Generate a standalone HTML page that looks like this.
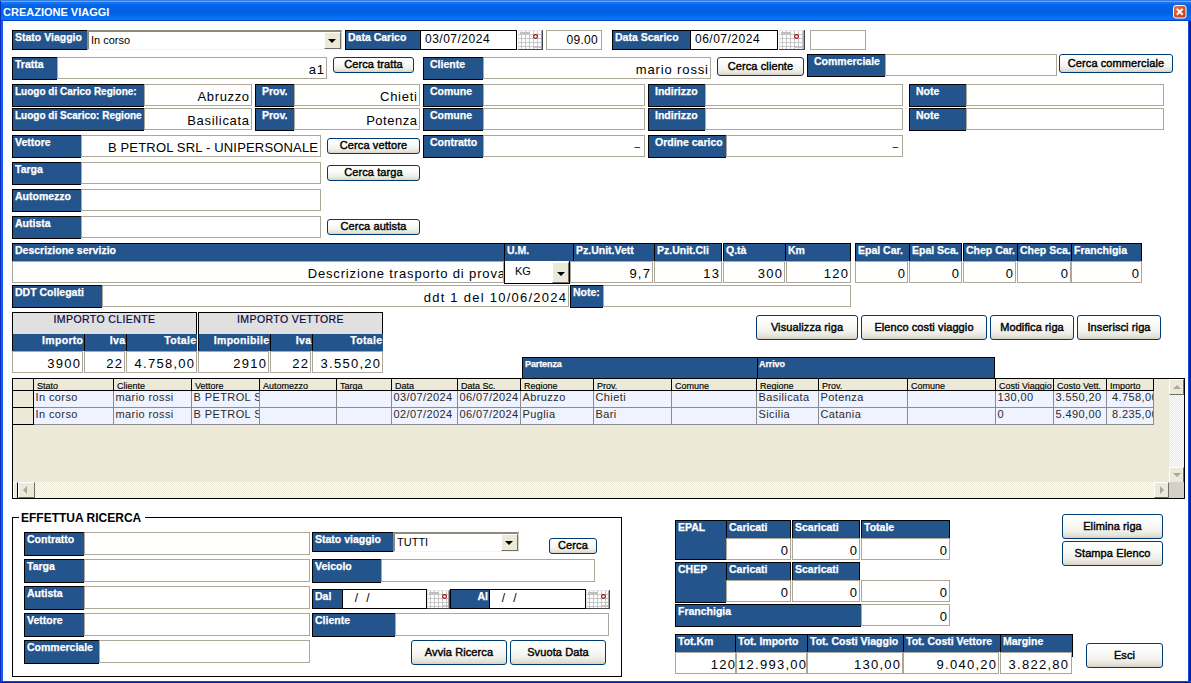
<!DOCTYPE html>
<html><head><meta charset="utf-8"><title>Creazione Viaggi</title>
<style>
html,body{margin:0;padding:0;}
body{width:1191px;height:683px;overflow:hidden;background:#fff;font-family:"Liberation Sans",sans-serif;}
#win{position:relative;width:1191px;height:683px;background:#fff;overflow:hidden;}
#win div{position:absolute;box-sizing:border-box;}
#win span{position:absolute;white-space:nowrap;line-height:1;}
#fl{left:0;top:0;width:3px;height:683px;background:linear-gradient(90deg,#0734d2 0,#0734d2 1px,#1a5ff0 1px,#1258ec 3px);z-index:3}
#fr{left:1188px;top:0;width:3px;height:683px;background:linear-gradient(90deg,#1048e4 0,#1048e4 1px,#0828b8 1px,#001890 3px);z-index:3}
#fb{left:0;top:681px;width:1191px;height:2px;background:linear-gradient(180deg,#1048e4 0,#1048e4 1px,#001a98 1px);z-index:3}
#title{left:0;top:0;width:1191px;height:21px;background:linear-gradient(180deg,#3a7be0 0px,#3a7be0 1px,#62a8ff 1px,#62a8ff 2px,#1a7cf6 2px,#0a6cf0 4px,#0064e6 6px,#0062e4 12px,#0066e8 15px,#0a70f4 17px,#0a70f4 20px,#0044cc 20px,#0044cc 21px);z-index:4}
#tt{left:3px;top:7px;color:#fff;font-weight:bold;font-size:11px;}
#cls{left:1173px;top:5px;width:14px;height:14px;}
#cls svg{display:block}
.lb,.hd{background:#23548c;border-top:1px solid #000;border-left:1px solid #000;color:#fff;font-weight:bold;overflow:hidden;-webkit-text-stroke:0.25px #fff;}
.lb{border-bottom:1px solid #000;}
.tb{background:#fff;border:1px solid #aca899;overflow:hidden;color:#000;}
.db{background:#fff;border:1px solid #000;overflow:hidden;color:#000;}
.bt{background:linear-gradient(180deg,#ffffff 0%,#fbfbf9 35%,#f1f0ea 70%,#e3e0d6 90%,#d6d0c4 100%);border:1px solid #003c74;border-radius:3px;font-weight:normal;text-align:center;color:#000;overflow:hidden;letter-spacing:0.1px;-webkit-text-stroke:0.4px #000;}
.bt span{text-align:center;}
.cal{overflow:hidden}
.cal svg{display:block}
.cb{background:#fff;border-top:2px solid #8e8b7d;border-left:2px solid #8e8b7d;border-right:1px solid #d4d0c8;border-bottom:1px solid #f4f3ee;overflow:hidden;color:#000;}
.cb .cbtn{right:0;top:0;bottom:0;background:#ece9d8;border-top:1px solid #fff;border-left:1px solid #fff;border-right:1px solid #716f64;border-bottom:1px solid #716f64;}
.cb .arr{position:absolute;left:3px;top:calc(50% - 2px);width:0;height:0;border-left:4px solid transparent;border-right:4px solid transparent;border-top:4px solid #000;}
.cbk{border:1px solid #000;border-top:0;}
.cbk .cbtn{top:1px;bottom:0;}
.cbk .arr{left:4px;top:calc(50% - 1px);}
.gh{background:#e0e0e0;border:1px solid #000;color:#0a0a48;font-size:10.5px;text-align:center;-webkit-text-stroke:0.2px #0a0a48;}
.gh span{text-align:center}
.sh{background:#23548c;border-left:1px solid #000;color:#fff;font-weight:bold;font-size:10.5px;overflow:hidden;-webkit-text-stroke:0.25px #fff;}
#grid{left:12px;top:378px;width:1173px;height:121px;border:1px solid #000;background:#ece9d8;overflow:hidden;}
.gch{background:#ece9d8;border-left:1px solid #000;border-bottom:1px solid #000;font-size:9px;overflow:hidden;color:#000;-webkit-text-stroke:0.15px #000;}
.gsel{background:#ece9d8;border-right:1px solid #000;border-bottom:1px solid #000;}
.gc{background:#eff3ff;border-left:1px solid #8c8c8c;border-bottom:1px solid #8c8c8c;font-size:11px;letter-spacing:0.4px;overflow:hidden;color:#2a2a2a;}
#vsb{left:1156px;top:0;width:15px;height:103px;background:conic-gradient(#ece9d8 25%,#fdfdfb 0 50%,#ece9d8 0 75%,#fdfdfb 0) 0 0/2px 2px;}
#hsb{left:0;top:103px;width:1156px;height:16px;background:conic-gradient(#ece9d8 25%,#fdfdfb 0 50%,#ece9d8 0 75%,#fdfdfb 0) 0 0/2px 2px;}
.hs0{left:0;top:0;width:5px;height:16px;background:#ece9d8;border-left:1px solid #fff;border-top:1px solid #fff;border-right:1px solid #000;}
.sbb{width:15px;height:16px;background:#ece9d8;border-top:1px solid #fff;border-left:1px solid #fff;border-right:1px solid #716f64;border-bottom:1px solid #716f64;}
#corner{left:1156px;top:103px;width:15px;height:16px;background:#d4d0c8;}
.au,.ad,.al,.ar{position:absolute;width:0;height:0;}
.au{left:3px;top:5px;border-left:4px solid transparent;border-right:4px solid transparent;border-bottom:4px solid #aca899;}
.ad{left:3px;top:5px;border-left:4px solid transparent;border-right:4px solid transparent;border-top:4px solid #aca899;}
.al{left:4px;top:3px;border-top:4px solid transparent;border-bottom:4px solid transparent;border-right:4px solid #aca899;}
.ar{left:5px;top:3px;border-top:4px solid transparent;border-bottom:4px solid transparent;border-left:4px solid #aca899;}
#gbox{left:12px;top:517px;width:610px;height:160px;border:1px solid #000;}
#gtitle{left:19px;top:511px;width:126px;height:14px;background:#fff;font-size:12px;font-weight:bold;color:#000;}
#fl0{left:0;top:1px;width:1px;height:682px;background:#0a2cc0;z-index:6}

</style></head><body><div id="win">
<div id="title"><span id="tt">CREAZIONE VIAGGI</span><div id="cls"><svg width="14" height="14" viewBox="0 0 14 14"><defs><linearGradient id="cg" x1="0" y1="0" x2="1" y2="1"><stop offset="0" stop-color="#e87a5a"/><stop offset="0.45" stop-color="#e0501f"/><stop offset="1" stop-color="#c43c10"/></linearGradient></defs><rect x="0.5" y="0.5" width="12.5" height="12.5" rx="2.2" fill="url(#cg)" stroke="#fff" stroke-width="1"/><path d="M3.8 3.8 L9.7 9.7 M9.7 3.8 L3.8 9.7" stroke="#fff" stroke-width="2.1"/></svg></div></div>
<div id="fl"></div><div id="fr"></div><div id="fb"></div><div id="fl0"></div>
<div class="lb" style="left:12px;top:30px;width:75px;height:20px;"><span style="left:2px;top:1px;font-size:10.5px;">Stato Viaggio</span></div>
<div class="cb" style="left:87px;top:30px;width:255px;height:20px;"><span style="left:2px;top:3px;font-size:11px;">In corso</span><div class="cbtn" style="width:17px;"><i class="arr"></i></div></div>
<div class="lb" style="left:345px;top:30px;width:75px;height:20px;"><span style="left:2px;top:1px;font-size:10.5px;">Data Carico</span></div>
<div class="db" style="left:420px;top:30px;width:97px;height:20px;"><span style="left:4px;top:2px;font-size:12px;letter-spacing:0.5px;">03/07/2024</span></div>
<div class="cal" style="left:518px;top:30px;width:25px;height:20px;"><svg width="25" height="20" viewBox="0 0 25 20" shape-rendering="crispEdges"><rect x="0" y="0" width="25" height="20" fill="#44444e"/><rect x="0" y="0" width="24" height="19" fill="#e6e6ec"/><rect x="1" y="1" width="23" height="18" fill="#ffffff"/><rect x="3" y="1" width="1" height="18" fill="#c6c6c6"/><rect x="7" y="1" width="1" height="18" fill="#c6c6c6"/><rect x="11" y="1" width="1" height="18" fill="#c6c6c6"/><rect x="15" y="1" width="1" height="18" fill="#c6c6c6"/><rect x="19" y="1" width="1" height="18" fill="#c6c6c6"/><rect x="23" y="1" width="1" height="18" fill="#c6c6c6"/><rect x="1" y="4" width="23" height="1" fill="#c6c6c6"/><rect x="1" y="8" width="23" height="1" fill="#c6c6c6"/><rect x="1" y="12" width="23" height="1" fill="#c6c6c6"/><rect x="1" y="16" width="23" height="1" fill="#c6c6c6"/><rect x="23" y="1" width="1" height="18" fill="#a8a8b0"/><rect x="2" y="2" width="10" height="2" fill="#c0c0c0"/><rect x="15" y="16" width="8" height="2" fill="#c6c6c6"/></svg><svg width="25" height="20" viewBox="0 0 25 20" style="position:absolute;left:0;top:0"><circle cx="17.5" cy="6.5" r="1.9" fill="#fff" stroke="#990000" stroke-width="1.1"/></svg></div>
<div class="tb" style="left:546px;top:30px;width:56px;height:20px;letter-spacing:0.3px"><span style="right:3px;top:3px;font-size:12px;">09.00</span></div>
<div class="lb" style="left:612px;top:30px;width:78px;height:20px;"><span style="left:2px;top:1px;font-size:10.5px;">Data Scarico</span></div>
<div class="db" style="left:690px;top:30px;width:88px;height:20px;"><span style="left:4px;top:2px;font-size:12px;letter-spacing:0.5px;">06/07/2024</span></div>
<div class="cal" style="left:779px;top:30px;width:26px;height:20px;"><svg width="26" height="20" viewBox="0 0 26 20" shape-rendering="crispEdges"><rect x="0" y="0" width="26" height="20" fill="#44444e"/><rect x="0" y="0" width="25" height="19" fill="#e6e6ec"/><rect x="1" y="1" width="24" height="18" fill="#ffffff"/><rect x="3" y="1" width="1" height="18" fill="#c6c6c6"/><rect x="7" y="1" width="1" height="18" fill="#c6c6c6"/><rect x="11" y="1" width="1" height="18" fill="#c6c6c6"/><rect x="15" y="1" width="1" height="18" fill="#c6c6c6"/><rect x="19" y="1" width="1" height="18" fill="#c6c6c6"/><rect x="23" y="1" width="1" height="18" fill="#c6c6c6"/><rect x="1" y="4" width="24" height="1" fill="#c6c6c6"/><rect x="1" y="8" width="24" height="1" fill="#c6c6c6"/><rect x="1" y="12" width="24" height="1" fill="#c6c6c6"/><rect x="1" y="16" width="24" height="1" fill="#c6c6c6"/><rect x="24" y="1" width="1" height="18" fill="#a8a8b0"/><rect x="2" y="2" width="10" height="2" fill="#c0c0c0"/><rect x="15" y="16" width="9" height="2" fill="#c6c6c6"/></svg><svg width="26" height="20" viewBox="0 0 26 20" style="position:absolute;left:0;top:0"><circle cx="17.5" cy="6.5" r="1.9" fill="#fff" stroke="#990000" stroke-width="1.1"/></svg></div>
<div class="tb" style="left:810px;top:30px;width:56px;height:20px;"></div>
<div class="lb" style="left:12px;top:57px;width:45px;height:23px;"><span style="left:2px;top:1px;font-size:10.5px;">Tratta</span></div>
<div class="tb" style="left:57px;top:57px;width:270px;height:22px;"><span style="right:2px;top:5px;font-size:13px;letter-spacing:0.89px;margin-right:-0.89px;">a1</span></div>
<div class="bt" style="left:333px;top:57px;width:81px;height:16px;"><span style="left:0;right:0;top:1px;font-size:11px;">Cerca tratta</span></div>
<div class="lb" style="left:423px;top:57px;width:60px;height:23px;"><span style="left:6px;top:1px;font-size:10.5px;">Cliente</span></div>
<div class="tb" style="left:483px;top:57px;width:228px;height:22px;"><span style="right:2px;top:5px;font-size:13px;letter-spacing:0.86px;margin-right:-0.86px;">mario rossi</span></div>
<div class="bt" style="left:717px;top:57px;width:87px;height:19px;"><span style="left:0;right:0;top:3px;font-size:11px;">Cerca cliente</span></div>
<div class="lb" style="left:807px;top:54px;width:78px;height:23px;"><span style="left:6px;top:1px;font-size:10.5px;">Commerciale</span></div>
<div class="tb" style="left:885px;top:54px;width:172px;height:22px;"></div>
<div class="bt" style="left:1059px;top:54px;width:114px;height:19px;"><span style="left:0;right:0;top:3px;font-size:11px;">Cerca commerciale</span></div>
<div class="lb" style="left:12px;top:84px;width:132px;height:23px;"><span style="left:2px;top:2px;font-size:10px;">Luogo di Carico Regione:</span></div>
<div class="tb" style="left:144px;top:84px;width:108px;height:22px;"><span style="right:2px;top:5px;font-size:13px;letter-spacing:0.63px;margin-right:-0.63px;">Abruzzo</span></div>
<div class="lb" style="left:255px;top:84px;width:39px;height:23px;"><span style="left:6px;top:1px;font-size:10.5px;">Prov.</span></div>
<div class="tb" style="left:294px;top:84px;width:126px;height:22px;"><span style="right:2px;top:5px;font-size:13px;letter-spacing:0.75px;margin-right:-0.75px;">Chieti</span></div>
<div class="lb" style="left:423px;top:84px;width:60px;height:23px;"><span style="left:6px;top:1px;font-size:10.5px;">Comune</span></div>
<div class="tb" style="left:483px;top:84px;width:162px;height:22px;"></div>
<div class="lb" style="left:648px;top:84px;width:57px;height:23px;"><span style="left:6px;top:1px;font-size:10.5px;">Indirizzo</span></div>
<div class="tb" style="left:705px;top:84px;width:198px;height:22px;"></div>
<div class="lb" style="left:909px;top:84px;width:57px;height:23px;"><span style="left:6px;top:1px;font-size:10.5px;">Note</span></div>
<div class="tb" style="left:966px;top:84px;width:198px;height:22px;"></div>
<div class="lb" style="left:12px;top:108px;width:132px;height:23px;"><span style="left:2px;top:2px;font-size:10px;">Luogo di Scarico: Regione</span></div>
<div class="tb" style="left:144px;top:108px;width:108px;height:22px;"><span style="right:2px;top:5px;font-size:13px;letter-spacing:0.68px;margin-right:-0.68px;">Basilicata</span></div>
<div class="lb" style="left:255px;top:108px;width:39px;height:23px;"><span style="left:6px;top:1px;font-size:10.5px;">Prov.</span></div>
<div class="tb" style="left:294px;top:108px;width:126px;height:22px;"><span style="right:2px;top:5px;font-size:13px;letter-spacing:0.52px;margin-right:-0.52px;">Potenza</span></div>
<div class="lb" style="left:423px;top:108px;width:60px;height:23px;"><span style="left:6px;top:1px;font-size:10.5px;">Comune</span></div>
<div class="tb" style="left:483px;top:108px;width:162px;height:22px;"></div>
<div class="lb" style="left:648px;top:108px;width:57px;height:23px;"><span style="left:6px;top:1px;font-size:10.5px;">Indirizzo</span></div>
<div class="tb" style="left:705px;top:108px;width:198px;height:22px;"></div>
<div class="lb" style="left:909px;top:108px;width:57px;height:23px;"><span style="left:6px;top:1px;font-size:10.5px;">Note</span></div>
<div class="tb" style="left:966px;top:108px;width:198px;height:22px;"></div>
<div class="lb" style="left:12px;top:135px;width:69px;height:23px;"><span style="left:2px;top:1px;font-size:10.5px;">Vettore</span></div>
<div class="tb" style="left:81px;top:135px;width:240px;height:22px;"><span style="right:2px;top:5px;font-size:13px;letter-spacing:0.17px;margin-right:-0.17px;">B PETROL SRL - UNIPERSONALE</span></div>
<div class="bt" style="left:327px;top:138px;width:93px;height:16px;"><span style="left:0;right:0;top:1px;font-size:11px;">Cerca vettore</span></div>
<div class="lb" style="left:423px;top:135px;width:60px;height:23px;"><span style="left:6px;top:1px;font-size:10.5px;">Contratto</span></div>
<div class="tb" style="left:483px;top:135px;width:162px;height:22px;"><span style="right:4px;top:6px;font-size:10px;">–</span></div>
<div class="lb" style="left:648px;top:135px;width:78px;height:23px;"><span style="left:6px;top:1px;font-size:10.5px;">Ordine carico</span></div>
<div class="tb" style="left:726px;top:135px;width:177px;height:22px;"><span style="right:4px;top:6px;font-size:10px;">–</span></div>
<div class="lb" style="left:12px;top:162px;width:69px;height:23px;"><span style="left:2px;top:1px;font-size:10.5px;">Targa</span></div>
<div class="tb" style="left:81px;top:162px;width:240px;height:22px;"></div>
<div class="bt" style="left:327px;top:165px;width:93px;height:16px;"><span style="left:0;right:0;top:1px;font-size:11px;">Cerca targa</span></div>
<div class="lb" style="left:12px;top:189px;width:69px;height:23px;"><span style="left:2px;top:1px;font-size:10.5px;">Automezzo</span></div>
<div class="tb" style="left:81px;top:189px;width:240px;height:22px;"></div>
<div class="lb" style="left:12px;top:216px;width:69px;height:23px;"><span style="left:2px;top:1px;font-size:10.5px;">Autista</span></div>
<div class="tb" style="left:81px;top:216px;width:240px;height:22px;"></div>
<div class="bt" style="left:327px;top:219px;width:93px;height:16px;"><span style="left:0;right:0;top:1px;font-size:11px;">Cerca autista</span></div>
<div class="hd" style="left:12px;top:243px;width:492px;height:18px;"><span style="left:2px;top:1px;font-size:10.5px;">Descrizione servizio</span></div>
<div class="hd" style="left:504px;top:243px;width:69px;height:18px;"><span style="left:2px;top:1px;font-size:10.5px;">U.M.</span></div>
<div class="hd" style="left:573px;top:243px;width:81px;height:18px;"><span style="left:2px;top:1px;font-size:10.5px;">Pz.Unit.Vett</span></div>
<div class="hd" style="left:654px;top:243px;width:68px;height:18px;border-right:1px solid #000;"><span style="left:2px;top:1px;font-size:10.5px;">Pz.Unit.Cli</span></div>
<div class="hd" style="left:723px;top:243px;width:62px;height:18px;"><span style="left:2px;top:1px;font-size:10.5px;">Q.tà</span></div>
<div class="hd" style="left:785px;top:243px;width:66px;height:18px;border-right:1px solid #000;"><span style="left:2px;top:1px;font-size:10.5px;">Km</span></div>
<div class="tb" style="left:12px;top:261px;width:492px;height:22px;"><span style="right:-2px;top:5px;font-size:13px;letter-spacing:0.85px;margin-right:-0.85px;">Descrizione trasporto di prova</span></div>
<div class="cb cbk" style="left:504px;top:261px;width:66px;height:23px;"><span style="left:10px;top:5px;font-size:11px;">KG</span><div class="cbtn" style="width:17px;"><i class="arr"></i></div></div>
<div class="tb" style="left:570px;top:261px;width:83px;height:22px;"><span style="right:2px;top:5px;font-size:13px;letter-spacing:1.27px;margin-right:-1.27px;">9,7</span></div>
<div class="tb" style="left:654px;top:261px;width:68px;height:22px;"><span style="right:2px;top:5px;font-size:13px;letter-spacing:1.25px;margin-right:-1.25px;">13</span></div>
<div class="tb" style="left:723px;top:261px;width:62px;height:22px;"><span style="right:2px;top:5px;font-size:13px;letter-spacing:1.25px;margin-right:-1.25px;">300</span></div>
<div class="tb" style="left:786px;top:261px;width:65px;height:22px;"><span style="right:2px;top:5px;font-size:13px;letter-spacing:1.25px;margin-right:-1.25px;">120</span></div>
<div class="hd" style="left:855px;top:243px;width:54px;height:18px;"><span style="left:2px;top:1px;font-size:10.5px;">Epal Car.</span></div>
<div class="hd" style="left:909px;top:243px;width:53px;height:18px;border-right:1px solid #000;"><span style="left:2px;top:1px;font-size:10.5px;">Epal Sca.</span></div>
<div class="hd" style="left:963px;top:243px;width:54px;height:18px;"><span style="left:2px;top:1px;font-size:10.5px;">Chep Car.</span></div>
<div class="hd" style="left:1017px;top:243px;width:54px;height:18px;"><span style="left:2px;top:1px;font-size:10.5px;">Chep Sca.</span></div>
<div class="hd" style="left:1071px;top:243px;width:71px;height:18px;border-right:1px solid #000;"><span style="left:2px;top:1px;font-size:10.5px;">Franchigia</span></div>
<div class="tb" style="left:855px;top:261px;width:53px;height:22px;"><span style="right:2px;top:5px;font-size:13px;letter-spacing:1.25px;margin-right:-1.25px;">0</span></div>
<div class="tb" style="left:909px;top:261px;width:53px;height:22px;"><span style="right:2px;top:5px;font-size:13px;letter-spacing:1.25px;margin-right:-1.25px;">0</span></div>
<div class="tb" style="left:963px;top:261px;width:53px;height:22px;"><span style="right:2px;top:5px;font-size:13px;letter-spacing:1.25px;margin-right:-1.25px;">0</span></div>
<div class="tb" style="left:1017px;top:261px;width:54px;height:22px;"><span style="right:2px;top:5px;font-size:13px;letter-spacing:1.25px;margin-right:-1.25px;">0</span></div>
<div class="tb" style="left:1071px;top:261px;width:71px;height:22px;"><span style="right:2px;top:5px;font-size:13px;letter-spacing:1.25px;margin-right:-1.25px;">0</span></div>
<div class="lb" style="left:12px;top:285px;width:90px;height:23px;"><span style="left:2px;top:1px;font-size:10.5px;">DDT Collegati</span></div>
<div class="tb" style="left:102px;top:285px;width:467px;height:22px;"><span style="right:2px;top:5px;font-size:13px;letter-spacing:1.25px;margin-right:-1.25px;">ddt 1 del 10/06/2024</span></div>
<div class="lb" style="left:570px;top:285px;width:33px;height:23px;"><span style="left:2px;top:1px;font-size:10.5px;">Note:</span></div>
<div class="tb" style="left:603px;top:285px;width:248px;height:22px;"></div>
<div class="bt" style="left:756px;top:315px;width:102px;height:25px;"><span style="left:0;right:0;top:6px;font-size:11px;">Visualizza riga</span></div>
<div class="bt" style="left:861px;top:315px;width:126px;height:25px;"><span style="left:0;right:0;top:6px;font-size:11px;">Elenco costi viaggio</span></div>
<div class="bt" style="left:990px;top:315px;width:84px;height:25px;"><span style="left:0;right:0;top:6px;font-size:11px;">Modifica riga</span></div>
<div class="bt" style="left:1077px;top:315px;width:84px;height:25px;"><span style="left:0;right:0;top:6px;font-size:11px;">Inserisci riga</span></div>
<div class="gh" style="left:12px;top:312px;width:185px;height:23px;"><span style="left:0;right:0;top:1px;letter-spacing:0.4px">IMPORTO CLIENTE</span></div>
<div class="gh" style="left:198px;top:312px;width:185px;height:23px;"><span style="left:0;right:0;top:1px;letter-spacing:0.4px">IMPORTO VETTORE</span></div>
<div class="sh" style="left:12px;top:334px;width:72px;height:17px;"><span style="right:1px;top:1px;letter-spacing:0.3px;margin-right:-0.3px">Importo</span></div>
<div class="sh" style="left:84px;top:334px;width:42px;height:17px;"><span style="right:1px;top:1px;letter-spacing:0.3px;margin-right:-0.3px">Iva</span></div>
<div class="sh" style="left:126px;top:334px;width:71px;height:17px;"><span style="right:1px;top:1px;letter-spacing:0.3px;margin-right:-0.3px">Totale</span></div>
<div class="sh" style="left:198px;top:334px;width:72px;height:17px;"><span style="right:1px;top:1px;letter-spacing:0.3px;margin-right:-0.3px">Imponibile</span></div>
<div class="sh" style="left:270px;top:334px;width:42px;height:17px;"><span style="right:1px;top:1px;letter-spacing:0.3px;margin-right:-0.3px">Iva</span></div>
<div class="sh" style="left:312px;top:334px;width:71px;height:17px;"><span style="right:1px;top:1px;letter-spacing:0.3px;margin-right:-0.3px">Totale</span></div>
<div class="tb" style="left:12px;top:351px;width:71px;height:22px;"><span style="right:2px;top:5px;font-size:13px;letter-spacing:1.25px;margin-right:-1.25px;">3900</span></div>
<div class="tb" style="left:84px;top:351px;width:41px;height:22px;"><span style="right:2px;top:5px;font-size:13px;letter-spacing:1.25px;margin-right:-1.25px;">22</span></div>
<div class="tb" style="left:126px;top:351px;width:71px;height:22px;"><span style="right:2px;top:5px;font-size:13px;letter-spacing:1.26px;margin-right:-1.26px;">4.758,00</span></div>
<div class="tb" style="left:198px;top:351px;width:71px;height:22px;"><span style="right:2px;top:5px;font-size:13px;letter-spacing:1.25px;margin-right:-1.25px;">2910</span></div>
<div class="tb" style="left:270px;top:351px;width:41px;height:22px;"><span style="right:2px;top:5px;font-size:13px;letter-spacing:1.25px;margin-right:-1.25px;">22</span></div>
<div class="tb" style="left:312px;top:351px;width:71px;height:22px;"><span style="right:2px;top:5px;font-size:13px;letter-spacing:1.26px;margin-right:-1.26px;">3.550,20</span></div>
<div class="hd" style="left:522px;top:357px;width:235px;height:21px;"><span style="left:2px;top:2px;font-size:9px;letter-spacing:-0.1px;">Partenza</span></div>
<div class="hd" style="left:757px;top:357px;width:238px;height:21px;border-right:1px solid #000;"><span style="left:1px;top:2px;font-size:9px;letter-spacing:-0.1px;">Arrivo</span></div>
<div id="grid">
<div class="gch" style="left:20px;top:0px;width:81px;height:12px;"><span style="left:3px;top:3px">Stato</span></div>
<div class="gch" style="left:100px;top:0px;width:79px;height:12px;"><span style="left:3px;top:3px">Cliente</span></div>
<div class="gch" style="left:178px;top:0px;width:69px;height:12px;"><span style="left:3px;top:3px">Vettore</span></div>
<div class="gch" style="left:246px;top:0px;width:78px;height:12px;"><span style="left:3px;top:3px">Automezzo</span></div>
<div class="gch" style="left:323px;top:0px;width:56px;height:12px;"><span style="left:3px;top:3px">Targa</span></div>
<div class="gch" style="left:378px;top:0px;width:67px;height:12px;"><span style="left:3px;top:3px">Data</span></div>
<div class="gch" style="left:444px;top:0px;width:64px;height:12px;"><span style="left:3px;top:3px">Data Sc.</span></div>
<div class="gch" style="left:507px;top:0px;width:74px;height:12px;"><span style="left:3px;top:3px">Regione</span></div>
<div class="gch" style="left:580px;top:0px;width:79px;height:12px;"><span style="left:3px;top:3px">Prov.</span></div>
<div class="gch" style="left:658px;top:0px;width:86px;height:12px;"><span style="left:3px;top:3px">Comune</span></div>
<div class="gch" style="left:743px;top:0px;width:63px;height:12px;"><span style="left:3px;top:3px">Regione</span></div>
<div class="gch" style="left:805px;top:0px;width:90px;height:12px;"><span style="left:3px;top:3px">Prov.</span></div>
<div class="gch" style="left:894px;top:0px;width:89px;height:12px;"><span style="left:3px;top:3px">Comune</span></div>
<div class="gch" style="left:982px;top:0px;width:59px;height:12px;"><span style="left:3px;top:3px">Costi Viaggio</span></div>
<div class="gch" style="left:1040px;top:0px;width:54px;height:12px;"><span style="left:3px;top:3px">Costo Vett.</span></div>
<div class="gch" style="left:1093px;top:0px;width:48px;height:12px;border-right:1px solid #000;"><span style="left:3px;top:3px">Importo</span></div>
<div class="gsel" style="left:0px;top:0px;width:21px;height:12px;"></div>
<div class="gc" style="left:20px;top:12px;width:81px;height:17px;"><span style="left:1.5px;top:1px">In corso</span></div>
<div class="gc" style="left:100px;top:12px;width:79px;height:17px;"><span style="left:1.5px;top:1px">mario rossi</span></div>
<div class="gc" style="left:178px;top:12px;width:69px;height:17px;"><span style="left:1.5px;top:1px">B PETROL SRL</span></div>
<div class="gc" style="left:246px;top:12px;width:78px;height:17px;"><span style="left:1.5px;top:1px"></span></div>
<div class="gc" style="left:323px;top:12px;width:56px;height:17px;"><span style="left:1.5px;top:1px"></span></div>
<div class="gc" style="left:378px;top:12px;width:67px;height:17px;"><span style="left:1.5px;top:1px">03/07/2024</span></div>
<div class="gc" style="left:444px;top:12px;width:64px;height:17px;"><span style="left:1.5px;top:1px">06/07/2024</span></div>
<div class="gc" style="left:507px;top:12px;width:74px;height:17px;"><span style="left:1.5px;top:1px">Abruzzo</span></div>
<div class="gc" style="left:580px;top:12px;width:79px;height:17px;"><span style="left:1.5px;top:1px">Chieti</span></div>
<div class="gc" style="left:658px;top:12px;width:86px;height:17px;"><span style="left:1.5px;top:1px"></span></div>
<div class="gc" style="left:743px;top:12px;width:63px;height:17px;"><span style="left:1.5px;top:1px">Basilicata</span></div>
<div class="gc" style="left:805px;top:12px;width:90px;height:17px;"><span style="left:1.5px;top:1px">Potenza</span></div>
<div class="gc" style="left:894px;top:12px;width:89px;height:17px;"><span style="left:1.5px;top:1px"></span></div>
<div class="gc" style="left:982px;top:12px;width:59px;height:17px;"><span style="left:1.5px;top:1px">130,00</span></div>
<div class="gc" style="left:1040px;top:12px;width:54px;height:17px;"><span style="left:1.5px;top:1px">3.550,20</span></div>
<div class="gc" style="left:1093px;top:12px;width:48px;height:17px;border-right:1px solid #8c8c8c;"><span style="left:5px;top:1px">4.758,00</span></div>
<div class="gsel" style="left:0px;top:12px;width:21px;height:17px;"></div>
<div class="gc" style="left:20px;top:29px;width:81px;height:17px;"><span style="left:1.5px;top:1px">In corso</span></div>
<div class="gc" style="left:100px;top:29px;width:79px;height:17px;"><span style="left:1.5px;top:1px">mario rossi</span></div>
<div class="gc" style="left:178px;top:29px;width:69px;height:17px;"><span style="left:1.5px;top:1px">B PETROL SRL</span></div>
<div class="gc" style="left:246px;top:29px;width:78px;height:17px;"><span style="left:1.5px;top:1px"></span></div>
<div class="gc" style="left:323px;top:29px;width:56px;height:17px;"><span style="left:1.5px;top:1px"></span></div>
<div class="gc" style="left:378px;top:29px;width:67px;height:17px;"><span style="left:1.5px;top:1px">02/07/2024</span></div>
<div class="gc" style="left:444px;top:29px;width:64px;height:17px;"><span style="left:1.5px;top:1px">06/07/2024</span></div>
<div class="gc" style="left:507px;top:29px;width:74px;height:17px;"><span style="left:1.5px;top:1px">Puglia</span></div>
<div class="gc" style="left:580px;top:29px;width:79px;height:17px;"><span style="left:1.5px;top:1px">Bari</span></div>
<div class="gc" style="left:658px;top:29px;width:86px;height:17px;"><span style="left:1.5px;top:1px"></span></div>
<div class="gc" style="left:743px;top:29px;width:63px;height:17px;"><span style="left:1.5px;top:1px">Sicilia</span></div>
<div class="gc" style="left:805px;top:29px;width:90px;height:17px;"><span style="left:1.5px;top:1px">Catania</span></div>
<div class="gc" style="left:894px;top:29px;width:89px;height:17px;"><span style="left:1.5px;top:1px"></span></div>
<div class="gc" style="left:982px;top:29px;width:59px;height:17px;"><span style="left:1.5px;top:1px">0</span></div>
<div class="gc" style="left:1040px;top:29px;width:54px;height:17px;"><span style="left:1.5px;top:1px">5.490,00</span></div>
<div class="gc" style="left:1093px;top:29px;width:48px;height:17px;border-right:1px solid #8c8c8c;"><span style="left:5px;top:1px">8.235,00</span></div>
<div class="gsel" style="left:0px;top:29px;width:21px;height:17px;"></div>
<div id="vsb"><div class="sbb" style="top:0;left:0"><i class="au"></i></div><div class="sbb" style="top:88px;left:0"><i class="ad"></i></div></div>
<div id="hsb"><div class="hs0"></div><div class="sbb" style="left:5px;width:17px;top:0"><i class="al"></i></div><div class="sbb" style="left:1141px;width:15px;top:0"><i class="ar"></i></div></div>
<div id="corner"></div>
</div>
<div id="gbox"></div><div id="gtitle"><span style="left:2px;top:1px">EFFETTUA RICERCA</span></div>
<div class="lb" style="left:24px;top:532px;width:60px;height:24px;"><span style="left:2px;top:1px;font-size:10.5px;">Contratto</span></div>
<div class="tb" style="left:84px;top:532px;width:226px;height:23px;"></div>
<div class="lb" style="left:24px;top:559px;width:60px;height:24px;"><span style="left:2px;top:1px;font-size:10.5px;">Targa</span></div>
<div class="tb" style="left:84px;top:559px;width:226px;height:23px;"></div>
<div class="lb" style="left:24px;top:586px;width:60px;height:24px;"><span style="left:2px;top:1px;font-size:10.5px;">Autista</span></div>
<div class="tb" style="left:84px;top:586px;width:226px;height:23px;"></div>
<div class="lb" style="left:24px;top:613px;width:60px;height:24px;"><span style="left:2px;top:1px;font-size:10.5px;">Vettore</span></div>
<div class="tb" style="left:84px;top:613px;width:226px;height:23px;"></div>
<div class="lb" style="left:24px;top:640px;width:75px;height:24px;"><span style="left:2px;top:1px;font-size:10.5px;">Commerciale</span></div>
<div class="tb" style="left:99px;top:640px;width:211px;height:23px;"></div>
<div class="lb" style="left:312px;top:532px;width:81px;height:20px;"><span style="left:2px;top:1px;font-size:10.5px;">Stato viaggio</span></div>
<div class="cb" style="left:393px;top:532px;width:126px;height:20px;"><span style="left:2px;top:3px;font-size:11px;">TUTTI</span><div class="cbtn" style="width:17px;"><i class="arr"></i></div></div>
<div class="bt" style="left:549px;top:538px;width:48px;height:16px;"><span style="left:0;right:0;top:1px;font-size:11px;">Cerca</span></div>
<div class="lb" style="left:312px;top:559px;width:69px;height:24px;"><span style="left:2px;top:1px;font-size:10.5px;">Veicolo</span></div>
<div class="tb" style="left:381px;top:559px;width:214px;height:23px;"></div>
<div class="lb" style="left:312px;top:589px;width:30px;height:20px;"><span style="left:2px;top:1px;font-size:10.5px;">Dal</span></div>
<div class="db" style="left:342px;top:589px;width:85px;height:20px;"><span style="left:4px;top:2px;font-size:12px;letter-spacing:0.5px;">&nbsp;&nbsp;/&nbsp;&nbsp;/</span></div>
<div class="cal" style="left:427px;top:590px;width:23px;height:19px;"><svg width="23" height="19" viewBox="0 0 23 19" shape-rendering="crispEdges"><rect x="0" y="0" width="23" height="19" fill="#44444e"/><rect x="0" y="0" width="22" height="18" fill="#e6e6ec"/><rect x="1" y="1" width="21" height="17" fill="#ffffff"/><rect x="3" y="1" width="1" height="17" fill="#c6c6c6"/><rect x="7" y="1" width="1" height="17" fill="#c6c6c6"/><rect x="11" y="1" width="1" height="17" fill="#c6c6c6"/><rect x="15" y="1" width="1" height="17" fill="#c6c6c6"/><rect x="19" y="1" width="1" height="17" fill="#c6c6c6"/><rect x="1" y="4" width="21" height="1" fill="#c6c6c6"/><rect x="1" y="8" width="21" height="1" fill="#c6c6c6"/><rect x="1" y="12" width="21" height="1" fill="#c6c6c6"/><rect x="1" y="16" width="21" height="1" fill="#c6c6c6"/><rect x="21" y="1" width="1" height="17" fill="#a8a8b0"/><rect x="2" y="2" width="10" height="2" fill="#c0c0c0"/><rect x="15" y="15" width="6" height="2" fill="#c6c6c6"/></svg><svg width="23" height="19" viewBox="0 0 23 19" style="position:absolute;left:0;top:0"><circle cx="17.5" cy="6.5" r="1.9" fill="#fff" stroke="#990000" stroke-width="1.1"/></svg></div>
<div class="lb" style="left:450px;top:589px;width:39px;height:20px;"><span style="right:1px;top:1px;font-size:10.5px;">Al</span></div>
<div class="db" style="left:489px;top:589px;width:97px;height:20px;"><span style="left:4px;top:2px;font-size:12px;letter-spacing:0.5px;">&nbsp;&nbsp;/&nbsp;&nbsp;/</span></div>
<div class="cal" style="left:586px;top:590px;width:24px;height:19px;"><svg width="24" height="19" viewBox="0 0 24 19" shape-rendering="crispEdges"><rect x="0" y="0" width="24" height="19" fill="#44444e"/><rect x="0" y="0" width="23" height="18" fill="#e6e6ec"/><rect x="1" y="1" width="22" height="17" fill="#ffffff"/><rect x="3" y="1" width="1" height="17" fill="#c6c6c6"/><rect x="7" y="1" width="1" height="17" fill="#c6c6c6"/><rect x="11" y="1" width="1" height="17" fill="#c6c6c6"/><rect x="15" y="1" width="1" height="17" fill="#c6c6c6"/><rect x="19" y="1" width="1" height="17" fill="#c6c6c6"/><rect x="1" y="4" width="22" height="1" fill="#c6c6c6"/><rect x="1" y="8" width="22" height="1" fill="#c6c6c6"/><rect x="1" y="12" width="22" height="1" fill="#c6c6c6"/><rect x="1" y="16" width="22" height="1" fill="#c6c6c6"/><rect x="22" y="1" width="1" height="17" fill="#a8a8b0"/><rect x="2" y="2" width="10" height="2" fill="#c0c0c0"/><rect x="15" y="15" width="7" height="2" fill="#c6c6c6"/></svg><svg width="24" height="19" viewBox="0 0 24 19" style="position:absolute;left:0;top:0"><circle cx="17.5" cy="6.5" r="1.9" fill="#fff" stroke="#990000" stroke-width="1.1"/></svg></div>
<div class="lb" style="left:312px;top:613px;width:83px;height:24px;"><span style="left:2px;top:1px;font-size:10.5px;">Cliente</span></div>
<div class="tb" style="left:395px;top:613px;width:214px;height:23px;"></div>
<div class="bt" style="left:411px;top:640px;width:96px;height:25px;"><span style="left:0;right:0;top:6px;font-size:11px;">Avvia Ricerca</span></div>
<div class="bt" style="left:510px;top:640px;width:96px;height:25px;"><span style="left:0;right:0;top:6px;font-size:11px;">Svuota Data</span></div>
<div class="lb" style="left:675px;top:520px;width:51px;height:40px;"><span style="left:2px;top:1px;font-size:10.5px;">EPAL</span></div>
<div class="hd" style="left:726px;top:520px;width:65px;height:18px;border-right:1px solid #000;"><span style="left:2px;top:1px;font-size:10.5px;">Caricati</span></div>
<div class="hd" style="left:792px;top:520px;width:68px;height:18px;border-right:1px solid #000;"><span style="left:2px;top:1px;font-size:10.5px;">Scaricati</span></div>
<div class="hd" style="left:861px;top:520px;width:89px;height:18px;border-right:1px solid #000;"><span style="left:2px;top:1px;font-size:10.5px;">Totale</span></div>
<div class="tb" style="left:726px;top:538px;width:65px;height:22px;"><span style="right:2px;top:5px;font-size:13px;letter-spacing:1.25px;margin-right:-1.25px;">0</span></div>
<div class="tb" style="left:792px;top:538px;width:68px;height:22px;"><span style="right:2px;top:5px;font-size:13px;letter-spacing:1.25px;margin-right:-1.25px;">0</span></div>
<div class="tb" style="left:861px;top:538px;width:89px;height:22px;"><span style="right:2px;top:5px;font-size:13px;letter-spacing:1.25px;margin-right:-1.25px;">0</span></div>
<div class="lb" style="left:675px;top:562px;width:51px;height:41px;"><span style="left:2px;top:1px;font-size:10.5px;">CHEP</span></div>
<div class="hd" style="left:726px;top:562px;width:65px;height:18px;border-right:1px solid #000;"><span style="left:2px;top:1px;font-size:10.5px;">Caricati</span></div>
<div class="hd" style="left:792px;top:562px;width:68px;height:18px;border-right:1px solid #000;"><span style="left:2px;top:1px;font-size:10.5px;">Scaricati</span></div>
<div class="tb" style="left:726px;top:580px;width:65px;height:22px;"><span style="right:2px;top:5px;font-size:13px;letter-spacing:1.25px;margin-right:-1.25px;">0</span></div>
<div class="tb" style="left:792px;top:580px;width:68px;height:22px;"><span style="right:2px;top:5px;font-size:13px;letter-spacing:1.25px;margin-right:-1.25px;">0</span></div>
<div class="tb" style="left:861px;top:580px;width:89px;height:22px;"><span style="right:2px;top:5px;font-size:13px;letter-spacing:1.25px;margin-right:-1.25px;">0</span></div>
<div class="lb" style="left:675px;top:604px;width:186px;height:23px;"><span style="left:2px;top:1px;font-size:10.5px;">Franchigia</span></div>
<div class="tb" style="left:861px;top:604px;width:89px;height:22px;"><span style="right:2px;top:5px;font-size:13px;letter-spacing:1.25px;margin-right:-1.25px;">0</span></div>
<div class="hd" style="left:675px;top:634px;width:61px;height:18px;"><span style="left:2px;top:1px;font-size:10.5px;">Tot.Km</span></div>
<div class="hd" style="left:735px;top:634px;width:73px;height:18px;"><span style="left:2px;top:1px;font-size:10.5px;">Tot. Importo</span></div>
<div class="hd" style="left:807px;top:634px;width:97px;height:18px;"><span style="left:2px;top:1px;font-size:10.5px;">Tot. Costi Viaggio</span></div>
<div class="hd" style="left:903px;top:634px;width:98px;height:18px;"><span style="left:2px;top:1px;font-size:10.5px;">Tot. Costi Vettore</span></div>
<div class="hd" style="left:1000px;top:634px;width:73px;height:18px;border-right:1px solid #000;"><span style="left:2px;top:1px;font-size:10.5px;">Margine</span></div>
<div class="" style="left:1072px;top:652px;width:1px;height:5px;background:#000;"></div>
<div class="tb" style="left:675px;top:652px;width:61px;height:22px;"><span style="right:0px;top:5px;font-size:13px;letter-spacing:1.25px;margin-right:-1.25px;">120</span></div>
<div class="tb" style="left:736px;top:652px;width:71px;height:22px;"><span style="right:0px;top:5px;font-size:13px;letter-spacing:1.26px;margin-right:-1.26px;">12.993,00</span></div>
<div class="tb" style="left:807px;top:652px;width:96px;height:22px;"><span style="right:2px;top:5px;font-size:13px;letter-spacing:1.26px;margin-right:-1.26px;">130,00</span></div>
<div class="tb" style="left:903px;top:652px;width:96px;height:22px;"><span style="right:2px;top:5px;font-size:13px;letter-spacing:1.26px;margin-right:-1.26px;">9.040,20</span></div>
<div class="tb" style="left:1000px;top:652px;width:72px;height:22px;"><span style="right:3px;top:5px;font-size:13px;letter-spacing:1.26px;margin-right:-1.26px;">3.822,80</span></div>
<div class="bt" style="left:1062px;top:514px;width:101px;height:25px;"><span style="left:0;right:0;top:6px;font-size:11px;">Elimina riga</span></div>
<div class="bt" style="left:1062px;top:541px;width:101px;height:25px;"><span style="left:0;right:0;top:6px;font-size:11px;">Stampa Elenco</span></div>
<div class="bt" style="left:1086px;top:643px;width:77px;height:25px;"><span style="left:0;right:0;top:6px;font-size:11px;">Esci</span></div>
</div></body></html>
